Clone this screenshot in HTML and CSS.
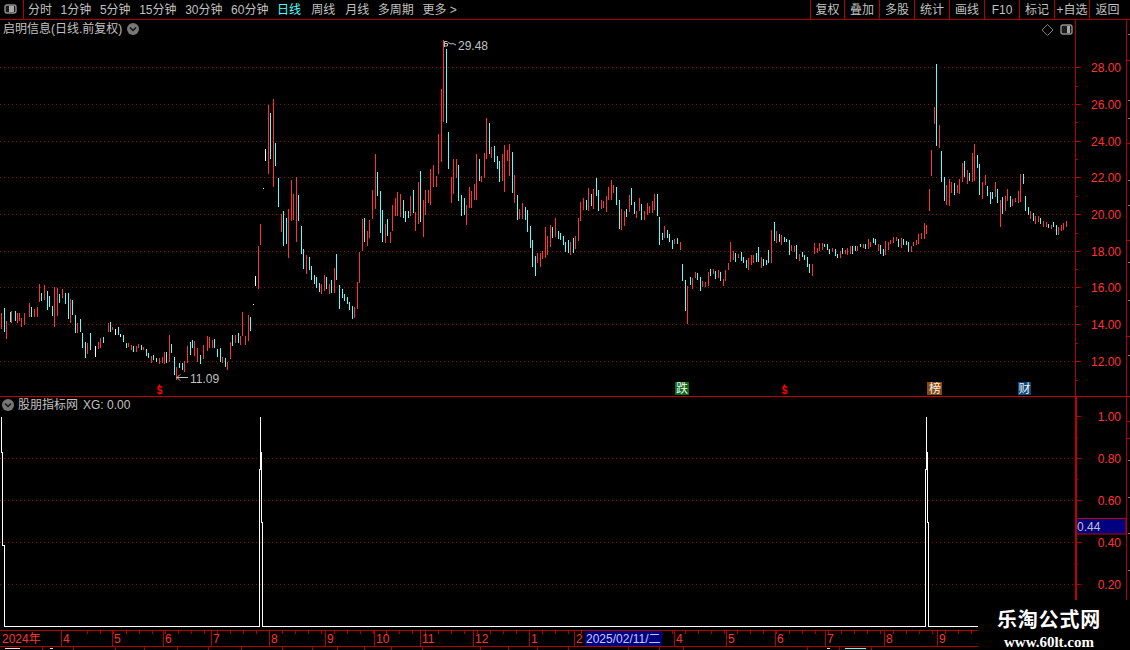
FILE: index.html
```html
<!DOCTYPE html>
<html lang="zh">
<head>
<meta charset="utf-8">
<title>启明信息</title>
<link rel="stylesheet" href="styles.css">
</head>
<body>
<div class="app">
  <header class="toolbar">
    <div class="toolbar-toggle">
      <svg class="layout-icon" viewBox="0 0 13 10" width="13" height="10"><rect class="li-frame" x="1" y="1" width="11" height="8" rx="2"/><rect class="li-fill" x="5" y="2" width="5" height="6"/></svg>
    </div>
    <nav class="periods">
      <span>分时</span><span>1分钟</span><span>5分钟</span><span>15分钟</span><span>30分钟</span><span>60分钟</span>
      <span class="period-active period-spaced">日线</span><span class="period-spaced">周线</span><span>月线</span><span>多周期</span><span>更多 &gt;</span>
    </nav>
    <div class="tools">
      <span class="tool tool-first">复权</span><span class="tool">叠加</span><span class="tool">多股</span><span class="tool">统计</span><span class="tool">画线</span><span class="tool">F10</span><span class="tool">标记</span><span class="tool">+自选</span><span class="tool tool-last">返回</span>
    </div>
  </header>

  <section class="panel panel-main">
    <div class="panel-title panel-title-main">
      <span>启明信息(日线.前复权)</span>
      <svg class="chev" viewBox="0 0 12 12" width="12" height="12"><circle class="chev-disc" cx="6" cy="6" r="6"/><path class="chev-mark" d="M3 4.5 6 7.5 9 4.5"/></svg>
    </div>
    <svg class="plot" viewBox="0 20 1130 376" width="1130" height="376">
      <g class="grid">
        <path d="M0 67.5H1075M0 104.5H1075M0 141.5H1075M0 177.5H1075M0 214.5H1075M0 251.5H1075M0 287.5H1075M0 324.5H1075M0 361.5H1075"/>
      </g>
      <g class="axis">
        <path d="M1075.5 20V396M1126.5 20V396"/>
        <path d="M1075 67.5h6M1075 104.5h6M1075 141.5h6M1075 177.5h6M1075 214.5h6M1075 251.5h6M1075 287.5h6M1075 324.5h6M1075 361.5h6"/>
        <path d="M1075 86.5h3M1075 122.5h3M1075 159.5h3M1075 196.5h3M1075 233.5h3M1075 269.5h3M1075 306.5h3M1075 343.5h3M1075 380.5h3"/>
        <path d="M1126 60.5h4M1126 143.5h4M1126 240.5h4M1126 336.5h4"/>
      </g>
      <g class="minor-tips"><path d="M1128 34.5h2M1128 100.5h2M1128 118.5h2M1128 180.5h2M1128 205.5h2M1128 262.5h2M1128 300.5h2M1128 355.5h2"/></g>
      <g class="price-labels">
        <text x="1121" y="72">28.00</text><text x="1121" y="109">26.00</text><text x="1121" y="146">24.00</text><text x="1121" y="182">22.00</text><text x="1121" y="219">20.00</text><text x="1121" y="256">18.00</text><text x="1121" y="292">16.00</text><text x="1121" y="329">14.00</text><text x="1121" y="366">12.00</text>
      </g>

      <g transform="translate(0.17 280) scale(.33333)">
        <path class="bar-red" d="M4 98V148M19 123V178M34 92V128M52 100V128M58 98V122M64 115V140M73 100V135M88 68V110M103 88V112M112 82V110M118 12V65M132 15V60M163 22V140M172 25V108M187 28V55M211 58V128M232 128V158M262 190V222M295 185V208M301 175V205M325 128V155M337 140V150M385 190V200M394 195V210M409 197V215M415 192V205M430 200V210M454 228V248M478 235V252M487 232V250M493 215V252M508 165V245M529 260V300M553 243V275M562 198V250M583 183V228M592 205V245M610 195V238M622 168V212M628 170V205M637 180V205M667 232V250M682 245V270M691 185V237M706 165V188M721 168V195M727 97V168M736 168V195M745 105V182"/>
        <path class="bar-cyan" d="M13 85V155M31 95V125M46 92V122M94 80V112M124 40V62M142 33V90M148 48V80M157 78V108M178 42V70M196 38V72M205 38V118M217 60V105M226 105V158M241 118V155M247 158V205M256 185V233M271 158V210M310 172V190M331 125V155M355 142V165M370 165V185M379 190V205M400 198V215M424 195V210M439 208V228M445 220V235M460 225V240M469 235V245M499 217V250M514 192V218M523 232V285M538 248V265M547 250V270M571 185V225M577 180V205M601 225V252M643 178V205M652 208V232M661 205V245M676 235V262M697 165V198M715 160V190M751 112V152"/>
        <path class="bar-white" d="M286 198V230M346 148V165M361 163V170"/>
      </g>

      <g transform="translate(240.17 180) scale(.33333)">
        <path class="bar-red" d="M55 198V328M61 132V195M199 225V282M244 312V342M253 285V333M268 312V342M283 264V339M343 381V414M352 306V387M358 216V309"/>
        <path class="bar-cyan" d="M184 138V222M190 207V267M208 232V270M214 258V300M223 285V312M229 291V323M238 310V336M259 291V327M274 300V339M289 222V300M298 315V387M307 327V354M313 342V363M322 351V372M328 366V390M337 378V417"/>
        <path class="bar-white" d="M40 373V376M46 288V318M70 24V27"/>
      </g>

      <g transform="translate(240.17 30) scale(.33333)">
        <path class="bar-red" d="M85 225V432M100 207V470M124 552V606M145 537V684M154 450V573M160 491V570M169 441V636M367 567V663M382 603V648M388 570V624M397 480V567M406 372V537M436 582V639M451 606V639M457 525V603M466 504V558M472 486V558M481 492V561M511 498V558M526 546V603M535 456V582M550 510V621M556 480V555M565 480V519M571 417V525M580 405V471M589 438V471M595 312V432M604 177V396M610 30V276M634 441V519M640 387V492M649 387V444M679 525V585M688 471V534M694 483V534M703 462V510M709 372V510M724 438V456M733 369V444M739 264V387M754 351V384M787 372V453M793 345V486M802 360V393M808 342V438M823 435V519M838 537V567M847 519V567M886 678V700M892 669V700"/>
        <path class="bar-cyan" d="M91 249V387M106 339V408M115 444V531M130 543V648M139 564V642M175 495V573M373 564V636M412 426V498M421 483V609M427 540V636M442 567V618M490 510V564M496 543V576M505 543V564M520 480V549M541 423V576M619 57V279M625 306V417M655 405V513M664 495V558M673 504V555M718 387V453M748 279V372M763 348V396M772 378V417M778 393V456M817 366V489M832 495V570M856 531V570M862 540V606M871 588V654M877 630V700"/>
        <path class="bar-white" d="M76 357V393"/>
      </g>

      <g transform="translate(520.17 170) scale(.33333)">
        <path class="bar-red" d="M7 99V147M52 249V279M61 249V291M67 243V267M76 171V264M82 198V255M91 165V231M106 144V201M151 216V255M166 198V237M175 144V213M181 96V153M190 84V120M205 54V123M220 57V117M244 90V117M250 93V114M259 78V126M265 51V90M274 30V90M280 45V69M304 117V180M313 123V168M328 75V126M349 123V144M358 84V123M373 123V150M382 99V135M388 108V129M397 93V129M403 72V120M433 168V204M463 207V222M481 216V240M502 348V462M517 324V357M526 306V324M547 333V351M556 336V351M565 306V348M580 297V312M595 300V324M610 327V348M616 300V333M625 279V300M631 216V276M640 243V270M655 252V264M685 264V300"/>
        <path class="bar-cyan" d="M16 111V150M22 120V186M31 168V234M37 210V291M46 258V318M97 171V204M115 183V207M121 189V210M130 198V225M136 216V246M145 210V249M160 204V249M199 90V120M214 72V108M229 24V78M235 60V123M289 51V105M298 90V177M319 117V141M334 54V105M343 96V132M364 102V150M412 72V138M418 141V225M427 189V210M442 180V204M448 192V216M457 210V237M472 204V222M487 282V333M496 330V423M511 321V345M532 309V330M541 321V363M571 297V318M586 303V327M601 306V333M646 249V276M664 246V273M670 261V279M679 270V294"/>
      </g>

      <g transform="translate(730.17 210) scale(.33333)">
        <path class="bar-red" d="M10 123V150M25 132V144M55 144V180M64 135V165M70 135V159M94 141V174M124 60V159M139 63V99M154 75V105M184 105V123M193 108V126M208 132V153M247 162V198M253 99V132M262 114V129M268 99V123M277 99V120M307 114V126M331 123V144M346 120V132M352 114V135M361 108V132M382 108V123M400 102V114M415 87V117M421 96V111M445 102V123M466 93V135M475 96V120M481 90V102M490 81V99M499 81V93M514 84V114M544 108V126M550 96V108M559 90V105M565 72V102M574 69V87M583 39V87M589 45V72"/>
        <path class="bar-cyan" d="M16 129V156M34 126V153M40 141V159M49 150V174M79 129V156M85 111V156M100 147V168M109 150V165M115 120V159M133 36V93M148 72V96M163 81V96M169 87V96M178 90V135M199 105V147M217 126V141M223 135V150M232 141V171M238 162V189M283 102V111M292 102V120M298 117V132M316 117V138M322 132V144M337 114V132M367 108V132M376 108V123M391 102V111M406 102V117M430 84V99M436 87V105M451 105V132M460 117V138M505 87V111M520 87V105M529 93V105M535 96V126"/>
      </g>

      <g transform="translate(900.17 50) scale(.33333)">
        <path class="bar-red" d="M88 417V483M94 300V378M103 171V222M118 225V294M139 405V465M148 387V468M154 396V429M172 405V429M178 387V432M187 339V396M202 360V402M217 309V396M223 282V393M247 396V447M256 375V405M286 396V441M301 450V531M316 438V483M322 417V453M337 447V468M346 444V456M355 423V459M361 372V456M391 483V507M406 498V522M415 498V516M430 513V531M439 516V531M454 525V537M475 531V555M484 525V543M490 519V540M499 513V531"/>
        <path class="bar-cyan" d="M109 42V288M124 303V396M133 381V453M163 399V435M193 333V381M208 369V393M232 315V354M238 342V435M262 408V438M271 426V462M277 426V447M292 417V459M307 441V492M331 438V471M370 372V402M376 438V483M385 471V495M400 489V513M421 504V522M445 522V534M460 516V531M469 525V555"/>
      </g>

      <g class="callouts">
        <path class="callout-line" d="M444.5 47V41.5H447.5M445 43.5H447.5V46H445M448 42.5 451 44 453 43.5 456 45"/>
        <text x="458" y="50">29.48</text>
        <path class="callout-line" d="M176.5 377.5H188M180 374.5 177 377.5 180 380.5"/>
        <text x="190" y="383">11.09</text>
      </g>

      <g class="marks">
        <path class="mark-caret" d="M157.5 387 159.5 384 161.5 387Z"/>
        <text class="mark-dollar" x="159.5" y="393.500">$</text>
        <path class="mark-caret" d="M782.5 387 784.5 384 786.5 387Z"/>
        <text class="mark-dollar" x="784.5" y="393.500">$</text>
        <rect class="mark-green" x="675" y="382" width="14" height="13"/>
        <text class="mark-label" x="682" y="393">跌</text>
        <rect class="mark-brown" x="927" y="382" width="15" height="13"/>
        <text class="mark-label" x="935" y="393">榜</text>
        <rect class="mark-blue" x="1018" y="382" width="13" height="13"/>
        <text class="mark-label" x="1024.500" y="393">财</text>
      </g>
      <path class="diamond" d="M1047.500 24.500 1053 30 1047.500 35.500 1042 30Z"/>
      <rect class="li-frame" x="1061" y="25" width="11" height="9" rx="2"/>
      <rect class="li-fill" x="1067" y="26" width="3" height="7"/>
    </svg>
  </section>

  <section class="panel panel-sub">
    <div class="panel-title panel-title-sub">
      <svg class="chev" viewBox="0 0 12 12" width="12" height="12"><circle class="chev-disc" cx="6" cy="6" r="6"/><path class="chev-mark" d="M3 4.500 6 7.500 9 4.500"/></svg>
      <span>股朋指标网</span><span class="xg">XG: 0.00</span>
    </div>
    <svg class="plot" viewBox="0 397 1130 233" width="1130" height="233">
      <g class="grid"><path d="M0 458.500H1075M0 500.500H1075M0 542.500H1075M0 584.500H1075"/></g>
      <g class="axis">
        <path d="M1126.500 397V630"/>
        <path d="M1075 416.500h6M1075 458.500h6M1075 500.500h6M1075 542.500h6M1075 584.500h6"/>
        <path d="M1075 437.500h3M1075 479.500h3M1075 563.500h3"/>
        <path d="M1126 421.500h4M1126 438.500h4"/>
      </g>
      <path class="axis-thick" d="M1076 397V630"/>
      <g class="minor-tips"><path d="M1128 460.500h2M1128 497.500h2M1128 533.500h2M1128 570.500h2"/></g>
      <g class="price-labels">
        <text x="1121" y="421">1.00</text><text x="1121" y="463">0.80</text><text x="1121" y="505">0.60</text><text x="1121" y="547">0.40</text><text x="1121" y="589">0.20</text>
      </g>
      <rect class="value-box" x="1076.500" y="518.500" width="49.500" height="15.500"/>
      <text class="value-text" x="1077" y="531">0.44</text>
      <path class="signal" d="M1.500 416.500V452.500H2.500V545.500H4.500V626.500H259.500V469.500H260.500V416.500V452.500H261.500V522.500H262.500V626.500H925.500V469.500H926.500V416.500V452.500H927.500V522.500H928.500V626.500H1075"/>
    </svg>
  </section>

  <div class="timeline">
    <svg class="plot" viewBox="0 630 1130 17" width="1130" height="17">
      <path class="axis-line" d="M0 630.500H1130M0 646.500H1130"/>
      <path class="time-minor" d="M87 632.500H1130"/>
      <path class="axis-line" d="M61.500 631V646M112.500 631V646M163.500 631V646M211.500 631V646M269.500 631V646M325.500 631V646M374.500 631V646M420.500 631V646M473.500 631V646M529.500 631V646M574.500 631V646M674.500 631V646M775.500 631V646M825.500 631V646M884.500 631V646M937.500 631V646M726.500 631V646"/>
      <g class="time-labels">
        <text x="2" y="643">2024年</text><text x="63" y="643">4</text><text x="114" y="643">5</text><text x="165" y="643">6</text><text x="213" y="643">7</text><text x="271" y="643">8</text><text x="327" y="643">9</text><text x="376" y="643">10</text><text x="422" y="643">11</text><text x="475" y="643">12</text><text x="531" y="643">1</text><text x="576" y="643">2</text><text x="676" y="643">4</text><text x="728" y="643">5</text><text x="777" y="643">6</text><text x="827" y="643">7</text><text x="886" y="643">8</text><text x="939" y="643">9</text>
      </g>
      <rect class="date-box" x="585" y="631" width="77" height="15"/>
      <text class="date-text" x="586" y="643">2025/02/11/二</text>
    </svg>
  </div>

  <div class="footer-strip">
    <svg class="plot" viewBox="0 647 1130 3" width="1130" height="3">
      <path class="axis-line" d="M42.500 647V650M73.500 647V650M115.500 647V650M144.500 647V650M177.500 647V650M208.500 647V650M241.500 647V650M282.500 647V650M312.500 647V650M337.500 647V650M364.500 647V650M391.500 647V650M422.500 647V650M480.500 647V650M508.500 647V650M537.500 647V650M568.500 647V650M628.500 647V650M659.500 647V650M683.500 647V650M807.500 647V650M839.500 647V650M871.500 647V650"/>
      <path class="tip-white" d="M5 648.500H20M50 648.500H53M827 648.500H830"/>
      <path class="tip-cyan" d="M845 648.500H866"/>
    </svg>
  </div>

  <aside class="watermark">
    <div class="wm-title">乐淘公式网</div>
    <div class="wm-url">www.60lt.com</div>
  </aside>
</div>
</body>
</html>
```
FILE: styles.css
```css
* { box-sizing: border-box; }
html, body { margin: 0; padding: 0; background: #000; }
.app {
  position: relative;
  width: 1130px;
  height: 650px;
  overflow: hidden;
  display: flex;
  flex-direction: column;
  background: #000;
  color: #c0c0c0;
  font: 12px/1 "Liberation Sans", "Noto Sans CJK SC", sans-serif;
}

.toolbar {
  display: flex;
  align-items: stretch;
  height: 20px;
  border-bottom: 1px solid #b00000;
  flex: none;
}
.toolbar-toggle {
  width: 24px;
  border-right: 1px solid #b00000;
  padding: 4px 0 0 4px;
}
.layout-icon { display: block; }
.li-frame { fill: #1a1a1a; stroke: #909090; stroke-width: 1.4; }
.li-fill { fill: #a8a8a8; }
.periods {
  display: flex;
  align-items: center;
  gap: 8.6px;
  padding-left: 4px;
  flex: 1;
}
.period-active { color: #55ffff; }
.period-spaced { margin-right: 1.5px; }
.tools { display: flex; width: 320px; }
.tool {
  width: 35px;
  border-left: 1px solid #b00000;
  display: flex;
  align-items: center;
  justify-content: center;
}
.tool-first { width: 34px; }
.tool-last { flex: 1; padding-right: 5px; }

.panel { position: relative; flex: none; }
.panel-main { height: 377px; border-bottom: 1px solid #c00000; }
.panel-sub { height: 233px; }
.plot { display: block; }
.panel-title {
  position: absolute;
  display: flex;
  align-items: center;
  white-space: nowrap;
}
.panel-title-main { left: 3px; top: 3px; gap: 5px; }
.panel-title-sub { left: 2px; top: 2px; gap: 4px; }
.xg { margin-left: 1px; }
.chev { display: block; flex: none; }
.chev-disc { fill: #777; }
.chev-mark { fill: none; stroke: #111; stroke-width: 1.5; }

.grid path { fill: none; stroke: #841010; stroke-width: 1; stroke-dasharray: 1 3; shape-rendering: crispEdges; }
.axis path, .axis-line { fill: none; stroke: #b00000; stroke-width: 1; shape-rendering: crispEdges; }
.axis-thick { fill: none; stroke: #c00000; stroke-width: 2; shape-rendering: crispEdges; }
.minor-tips path { fill: none; stroke: #808080; stroke-width: 1; shape-rendering: crispEdges; }
.price-labels text { fill: #ff3232; font-size: 12px; text-anchor: end; }

.bar-red, .bar-cyan, .bar-white { fill: none; stroke-width: 3; shape-rendering: crispEdges; }
.bar-red { stroke: #ff3232; }
.bar-cyan { stroke: #55ffff; }
.bar-white { stroke: #ffffff; }

.callouts text { fill: #c0c0c0; font-size: 12px; }
.callout-line { fill: none; stroke: #c0c0c0; stroke-width: 1; }

.mark-caret { fill: #ff0000; }
.mark-dollar { fill: #ff0000; font-size: 10px; font-weight: 700; text-anchor: middle; }
.mark-green { fill: #0a6a1a; }
.mark-brown { fill: #8a4a10; }
.mark-blue { fill: #0a4a80; }
.mark-label { fill: #f0f0f0; font-size: 12px; text-anchor: middle; }
.diamond { fill: none; stroke: #808080; stroke-width: 1; }

.value-box { fill: #000080; stroke: #c00000; stroke-width: 1; }
.value-text { fill: #c0c0c0; font-size: 12px; }
.signal { fill: none; stroke: #ffffff; stroke-width: 1; shape-rendering: crispEdges; }

.timeline { height: 17px; flex: none; }
.footer-strip { height: 3px; flex: none; }
.time-minor { fill: none; stroke: #b00000; stroke-width: 3; stroke-dasharray: 1 12; shape-rendering: crispEdges; }
.time-labels text { fill: #ff3232; font-size: 12px; }
.date-box { fill: #000080; stroke: none; }
.date-text { fill: #c8c8ff; font-size: 12px; }
.tip-white, .tip-cyan { fill: none; stroke-width: 1; shape-rendering: crispEdges; }
.tip-white { stroke: #e0e0e0; }
.tip-cyan { stroke: #55ffff; }

.watermark {
  position: absolute;
  left: 978px;
  top: 600px;
  width: 152px;
  height: 50px;
  background: #000;
  color: #fff;
  display: flex;
  flex-direction: column;
  align-items: center;
  padding: 8px 10px 0 0;
  gap: 4px;
}
.wm-title {
  font: 700 20px/22px "Noto Sans CJK SC", sans-serif;
  letter-spacing: .8px;
}
.wm-url {
  font: 700 15px/16px "Liberation Serif", serif;
}
```
